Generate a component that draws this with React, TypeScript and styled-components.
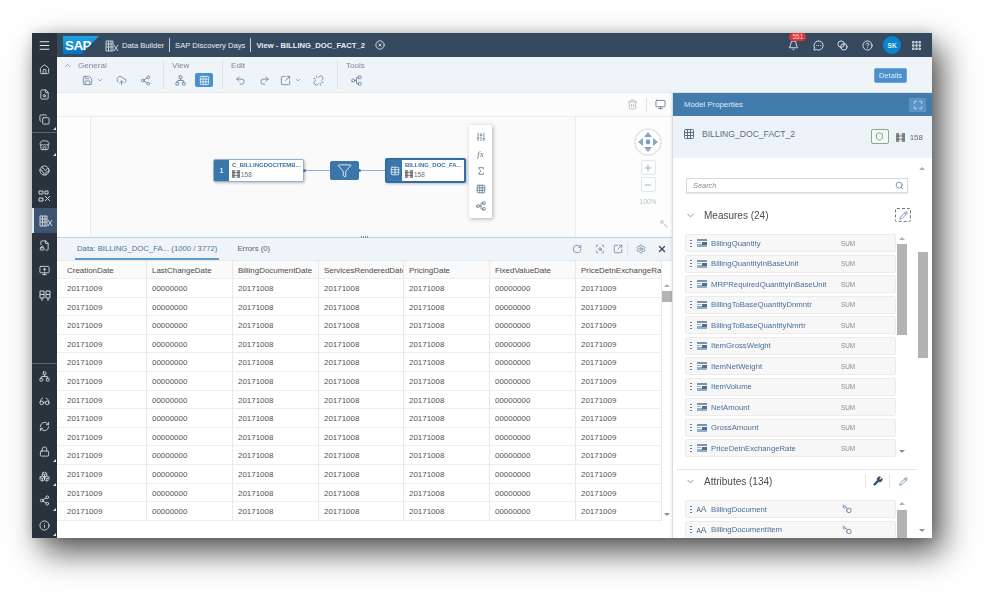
import React from "react";
import styled, { createGlobalStyle } from "styled-components";
import {
    Bell,
    Blend,
    Boxes,
    ChevronDown,
    ChevronUp,
    CircleHelp,
    CircleX,
    CloudUpload,
    Copy,
    Earth,
    FileLock2,
    FileSearch,
    Filter,
    Glasses,
    Grid3x3,
    Grip,
    Home,
    Info,
    Key,
    Lock,
    Maximize,
    Menu,
    MessageCircleMore,
    Minus,
    Monitor,
    MonitorUp,
    MoveUpLeft,
    Network,
    Pencil,
    Plus,
    Redo2,
    RefreshCw,
    RotateCw,
    Save,
    ScanSearch,
    Search,
    Settings,
    Share2,
    Shield,
    Sigma,
    SlidersVertical,
    SquareArrowOutUpRight,
    Store,
    Table,
    Trash2,
    Undo2,
    Unlink,
    Wrench,
    X,
} from "lucide-react";

const GlobalStyle = createGlobalStyle`
    html, body {
        margin: 0;
        background: #fff;
        font-family: "Liberation Sans", Arial, sans-serif;
        overflow: hidden;
    }
`;

const Page = styled.div`
    width: 997px;
    height: 603px;
    padding: 33px 0 0 32px;
    box-sizing: border-box;
`;

const Window = styled.div`
    width: 900px;
    height: 505px;
    display: flex;
    background: #fff;
    overflow: hidden;
    box-shadow: 10px 14px 30px rgba(0, 0, 0, 0.68), 0 0 12px rgba(0, 0, 0, 0.14);
    filter: blur(0.3px);
`;

/* left navigation */

const SideNav = styled.nav`
    width: 25px;
    flex: none;
    display: flex;
    flex-direction: column;
    background: #29323d;
    color: #cfd6de;
`;

const NavTop = styled.div`
    height: 24px;
    flex: none;
    display: flex;
    align-items: center;
    justify-content: center;
    color: #e4e9ee;
`;

const NavGroup = styled.div<{ $divided?: boolean }>`
    display: flex;
    flex-direction: column;
    border-bottom: ${(p) => (p.$divided ? "1px solid #5a6570" : "none")};
`;

const NavSpacer = styled.div`
    flex: 1;
    border-bottom: 1px solid #5a6570;
`;

const NavItem = styled.div<{ $active?: boolean; $corner?: boolean; $h?: number }>`
    position: relative;
    height: ${(p) => p.$h ?? 25}px;
    display: flex;
    align-items: center;
    justify-content: center;
    box-sizing: border-box;
    background: ${(p) => (p.$active ? "#3d5571" : "transparent")};
    border-left: ${(p) => (p.$active ? "2px solid #e4e9ee" : "0")};

    &::after {
        content: "";
        display: ${(p) => (p.$corner ? "block" : "none")};
        position: absolute;
        right: 1px;
        bottom: 2px;
        border-left: 3px solid transparent;
        border-bottom: 3px solid #dfe5ea;
    }
`;

/* shell bar */

const Main = styled.div`
    flex: 1;
    min-width: 0;
    display: flex;
    flex-direction: column;
`;

const ShellBar = styled.header`
    height: 24px;
    flex: none;
    display: flex;
    align-items: center;
    background: #354a5f;
    color: #e8edf2;
    font-size: 7.65px;
    padding-left: 6px;
`;

const SapLogo = styled.div`
    width: 36px;
    height: 18px;
    flex: none;
    display: flex;
    align-items: center;
    padding-left: 2px;
    margin-right: 6px;
    box-sizing: border-box;
    background: linear-gradient(#1ea4e4, #0a6fc2);
    clip-path: polygon(0 0, 100% 0, 52% 100%, 0 100%);
    color: #fff;
    font-size: 13.5px;
    font-weight: 700;
    letter-spacing: -0.6px;
`;

const Crumb = styled.span<{ $strong?: boolean; $first?: boolean }>`
    font-weight: ${(p) => (p.$strong ? 700 : 400)};
    margin-left: ${(p) => (p.$first ? 3 : 0)}px;
    white-space: nowrap;
`;

const CrumbSep = styled.span`
    width: 1px;
    height: 14px;
    background: #c4ced8;
    margin: 0 5px;
`;

const CrumbClose = styled.span`
    display: flex;
    margin-left: 10px;
`;

const ShellRight = styled.div`
    margin-left: auto;
    display: flex;
    align-items: center;
    padding-right: 3px;
`;

const ShellButton = styled.div`
    position: relative;
    width: 24.6px;
    height: 24px;
    display: flex;
    align-items: center;
    justify-content: center;
`;

const Badge = styled.span`
    position: absolute;
    top: 0;
    left: 8px;
    width: 17px;
    height: 8px;
    border-radius: 4px;
    background: #d5353b;
    color: #f5d6d6;
    font-size: 6.5px;
    line-height: 8px;
    text-align: center;
`;

const Avatar = styled.div`
    width: 18px;
    height: 18px;
    border-radius: 50%;
    background: #0a84cf;
    color: #e6f3fb;
    font-size: 6.5px;
    font-weight: 700;
    display: flex;
    align-items: center;
    justify-content: center;
`;

/* ribbon */

const Ribbon = styled.div`
    height: 36px;
    flex: none;
    display: flex;
    background: #eff4f9;
    color: #6d8aa8;
    border-bottom: 1px solid #e4e9ee;
    box-sizing: border-box;
`;

const RibbonGroup = styled.div<{ $w?: number; $indent: number; $labelIndent: number }>`
    width: ${(p) => (p.$w ? `${p.$w}px` : "auto")};
    flex: none;
    box-sizing: border-box;
    margin: 3px 0;
    padding-left: ${(p) => p.$indent}px;
    border-right: ${(p) => (p.$w ? "1px solid #dde3e9" : "none")};

    & > span {
        display: flex;
        align-items: center;
        gap: 6px;
        height: 10px;
        margin-left: ${(p) => p.$labelIndent}px;
        font-size: 8.1px;
        color: #7a8794;
    }
`;

const RibbonIcons = styled.div`
    display: flex;
    margin-top: 2px;
    height: 18px;
`;

const RibbonButton = styled.div<{ $w?: number; $active?: boolean }>`
    width: ${(p) => p.$w ?? 24}px;
    height: 16px;
    display: flex;
    align-items: center;
    justify-content: center;
    gap: 3px;
    position: relative;
    color: ${(p) => (p.$active ? "#dcebf7" : "#6d8aa8")};

    &::before {
        content: "";
        display: ${(p) => (p.$active ? "block" : "none")};
        position: absolute;
        inset: 1px 3px;
        background: #4a90cc;
        border-radius: 2px;
    }

    & > svg {
        position: relative;
    }
`;

const SidewaysNetwork = styled(Network)`
    transform: rotate(-90deg);
`;

const DetailsButton = styled.button`
    margin: 11px 25px 0 auto;
    width: 33px;
    height: 15px;
    padding: 0;
    border: 1px solid #6fa8d8;
    border-radius: 2px;
    background: #4a90cc;
    color: #e3eff8;
    font: 7.6px "Liberation Sans", Arial, sans-serif;
`;

/* workspace */

const Workspace = styled.div`
    flex: 1;
    min-height: 0;
    display: flex;
`;

const LeftPane = styled.div`
    width: 615px;
    flex: none;
    display: flex;
    flex-direction: column;
`;

const CanvasBar = styled.div`
    height: 24px;
    flex: none;
    box-sizing: border-box;
    display: flex;
    align-items: center;
    justify-content: flex-end;
    gap: 8px;
    padding-right: 6px;
    color: #6a7c8e;
    background: #fcfcfc;
    border-bottom: 1px solid #ececec;
`;

const BarDivider = styled.span<{ $h?: number }>`
    width: 1px;
    height: ${(p) => p.$h ?? 14}px;
    background: #dde2e6;
`;

const Canvas = styled.div`
    position: relative;
    height: 120px;
    flex: none;
    background: #fdfdfd;
`;

const Sheet = styled.div`
    position: absolute;
    left: 33px;
    top: 0;
    bottom: 0;
    width: 484px;
    background: #fafafa;
    border-left: 1px solid #ebebeb;
    border-right: 1px solid #ebebeb;
`;

const Wire = styled.div<{ $x: number; $w: number }>`
    position: absolute;
    left: ${(p) => p.$x}px;
    top: 53px;
    width: ${(p) => p.$w}px;
    height: 1px;
    background: #8fb2d0;
`;

const Port = styled.div<{ $x: number }>`
    position: absolute;
    left: ${(p) => p.$x}px;
    top: 52px;
    width: 3px;
    height: 3px;
    border-radius: 50%;
    background: #3a76aa;
`;

const Node = styled.div<{ $x: number; $y: number; $w: number; $h: number; $selected?: boolean }>`
    position: absolute;
    left: ${(p) => p.$x}px;
    top: ${(p) => p.$y}px;
    width: ${(p) => p.$w}px;
    height: ${(p) => p.$h}px;
    display: flex;
    box-sizing: border-box;
    border: ${(p) => (p.$selected ? "2px solid #2f6fa6" : "1px solid #8db4d4")};
    border-radius: 2px;
    background: #fff;
    box-shadow: 1px 1px 3px rgba(0, 0, 0, 0.25);
    overflow: hidden;
`;

const NodeTag = styled.div`
    width: 15px;
    flex: none;
    display: flex;
    align-items: center;
    justify-content: center;
    background: #3a76aa;
    color: #e8f0f7;
    font-size: 6.5px;
    font-weight: 700;
`;

const NodeBody = styled.div`
    min-width: 0;
    flex: 1;
    padding: 2px 0 0 3px;
    color: #3f73a1;
    font-size: 6px;
    font-weight: 700;
    white-space: nowrap;
`;

const NodeCount = styled.div`
    display: flex;
    align-items: center;
    gap: 1px;
    margin-top: 2px;
    color: #6b6b6b;
    font-size: 6.5px;
    font-weight: 400;
`;

const FilterNode = styled.div`
    position: absolute;
    left: 273px;
    top: 44px;
    width: 29px;
    height: 19px;
    display: flex;
    align-items: center;
    justify-content: center;
    border-radius: 2px;
    background: #3a76aa;
    color: #e8f0f7;
`;

const Palette = styled.div`
    position: absolute;
    left: 412px;
    top: 8px;
    width: 23px;
    height: 93px;
    display: flex;
    flex-direction: column;
    align-items: center;
    justify-content: space-around;
    padding: 3px 0;
    box-sizing: border-box;
    background: #fff;
    color: #5f7890;
    box-shadow: 1px 1px 4px rgba(0, 0, 0, 0.3);
`;

const FxMark = styled.span`
    font: italic 9px "Liberation Serif", serif;
    color: #5f7890;
`;

const NavPad = styled.div`
    position: absolute;
    left: 577px;
    top: 11px;
    display: flex;
    flex-direction: column;
    align-items: center;
    color: #8aa6be;
`;

const ZoomButton = styled.div<{ $first?: boolean }>`
    width: 13px;
    height: 13px;
    margin-top: ${(p) => (p.$first ? 4 : 2)}px;
    border: 1px solid #e1e6ea;
    border-radius: 2px;
    background: #fff;
    display: flex;
    align-items: center;
    justify-content: center;
`;

const ZoomLabel = styled.span`
    margin-top: 6px;
    font-size: 6.5px;
    color: #b4c2ce;
`;

const CornerIcon = styled.div`
    position: absolute;
    right: 3px;
    bottom: 4px;
    color: #c2c8cd;
`;

/* data preview */

const DataTabs = styled.div`
    position: relative;
    height: 24px;
    flex: none;
    box-sizing: border-box;
    display: flex;
    align-items: stretch;
    padding-left: 18px;
    background: #eff4f9;
    border-top: 1px solid #b7d1e8;
    border-bottom: 1px solid #e6e9ec;
    font-size: 7.75px;
    color: #58708a;

    &::before {
        content: "";
        position: absolute;
        left: 304px;
        top: -2px;
        width: 8px;
        height: 2px;
        background: repeating-linear-gradient(90deg, #7d96ad 0 1px, transparent 1px 2px);
    }
`;

const Tab = styled.div<{ $active?: boolean }>`
    display: flex;
    align-items: center;
    margin-right: 16px;
    padding: 0 2px;
    color: ${(p) => (p.$active ? "#4f7394" : "#56606a")};
    border-bottom: ${(p) => (p.$active ? "2px solid #5b9bd0" : "2px solid transparent")};
`;

const TabTools = styled.div`
    margin-left: auto;
    display: flex;
    align-items: center;
    color: #6d8aa8;
`;

const TabTool = styled.span<{ $w: number; $dark?: boolean }>`
    width: ${(p) => p.$w}px;
    display: flex;
    justify-content: center;
    color: ${(p) => (p.$dark ? "#2f4a66" : "inherit")};
`;

const TableWrap = styled.div`
    position: relative;
    flex: 1;
    min-height: 0;
    background: #fff;
`;

const TableRow = styled.div<{ $head?: boolean }>`
    display: grid;
    grid-template-columns: 90px 86px 86px 85px 86px 86px 86px;
    width: 605px;
    height: ${(p) => (p.$head ? 18 : 18.6)}px;
    box-sizing: border-box;
    border-bottom: 1px solid #eeeeee;
    background: ${(p) => (p.$head ? "#fafafa" : "#fff")};
    color: ${(p) => (p.$head ? "#4b4b4b" : "#525252")};
    font-size: 7.95px;
`;

const Cell = styled.div`
    padding-left: 5px;
    line-height: 19px;
    white-space: nowrap;
    overflow: hidden;
    border-right: 1px solid #e8e8e8;

    &:first-child {
        padding-left: 10px;
    }
`;

const ScrollTrack = styled.div<{ $x: number; $y: number; $h: number }>`
    position: absolute;
    left: ${(p) => p.$x}px;
    top: ${(p) => p.$y}px;
    width: 10px;
    height: ${(p) => p.$h}px;
    background: #b3b3b3;
`;

const ScrollArrow = styled.div<{ $x: number; $y: number; $down?: boolean }>`
    position: absolute;
    left: ${(p) => p.$x}px;
    top: ${(p) => p.$y}px;
    border-left: 3px solid transparent;
    border-right: 3px solid transparent;
    border-bottom: ${(p) => (p.$down ? "none" : "3px solid #b0b0b0")};
    border-top: ${(p) => (p.$down ? "3px solid #8f8f8f" : "none")};
`;

/* properties panel */

const RightPane = styled.aside`
    position: relative;
    flex: 1;
    min-width: 0;
    display: flex;
    flex-direction: column;
    border-left: 1px solid #dcdcdc;
    box-shadow: -1px 0 2px rgba(0, 0, 0, 0.08);
    background: #fff;
`;

const PanelHeader = styled.div`
    height: 23px;
    flex: none;
    display: flex;
    align-items: center;
    justify-content: space-between;
    padding: 0 6px 0 11px;
    background: #427cad;
    color: #dfeaf4;
    font-size: 7.8px;
`;

const ExpandButton = styled.div`
    width: 17px;
    height: 14px;
    display: flex;
    align-items: center;
    justify-content: center;
    background: #5b93c5;
    color: #dfeaf4;
`;

const ModelInfo = styled.div`
    height: 42px;
    flex: none;
    display: flex;
    align-items: flex-start;
    box-sizing: border-box;
    padding: 12px 9px 0 10px;
    background: #ebf2f8;
    color: #5d6d7e;
    font-size: 8.6px;
`;

const ModelName = styled.span`
    margin-left: 7px;
    line-height: 12px;
`;

const ShieldBox = styled.div`
    margin: 1px 7px 0 auto;
    width: 18px;
    height: 15px;
    box-sizing: border-box;
    display: flex;
    align-items: center;
    justify-content: center;
    border: 1px solid #7fae8b;
    border-radius: 2px;
    background: #f3f7f5;
    color: #5f8a6c;
`;

const CountLabel = styled.span`
    display: flex;
    align-items: center;
    gap: 5px;
    margin-top: 2px;
    height: 14px;
    color: #6b6b6b;
    font-size: 8px;
`;

const PanelBody = styled.div`
    flex: 1;
    min-height: 0;
    overflow: hidden;
    padding: 20px 0 0 12px;
`;

const SearchBox = styled.div`
    width: 222px;
    height: 15px;
    margin-left: 1px;
    box-sizing: border-box;
    display: flex;
    align-items: center;
    justify-content: space-between;
    padding: 0 3px 0 6px;
    border: 1px solid #dadada;
    box-shadow: 0 1px 1px rgba(0, 0, 0, 0.08);
    color: #8c8c8c;
    font-size: 7.4px;
    font-style: italic;

    & > svg {
        color: #587692;
    }
`;

const SectionHead = styled.div<{ $top: number; $w: number }>`
    display: flex;
    align-items: center;
    height: 14px;
    margin-top: ${(p) => p.$top}px;
    width: ${(p) => p.$w}px;
    color: #4c4c4c;
    font-size: 10px;
`;

const HeadChevron = styled(ChevronDown)`
    color: #6d8aa8;
    margin-right: 8px;
`;

const HeadTools = styled.div`
    margin-left: auto;
    display: flex;
    align-items: center;
    color: #4d79a3;
`;

const DashedButton = styled.div`
    width: 16px;
    height: 14px;
    box-sizing: border-box;
    display: flex;
    align-items: center;
    justify-content: center;
    border: 1px dashed #777;
    border-radius: 2px;
`;

const ToolCell = styled.div<{ $w: number; $dark?: boolean }>`
    width: ${(p) => p.$w}px;
    height: 14px;
    display: flex;
    align-items: center;
    justify-content: center;
    color: ${(p) => (p.$dark ? "#2f4a66" : "inherit")};
    border-left: 1px solid #e3e3e3;
`;

const Rule = styled.div`
    width: 240px;
    height: 1px;
    margin: 12px 0 4px -8px;
    background: #e7e7e7;
`;

const FieldList = styled.div<{ $top: number }>`
    display: flex;
    flex-direction: column;
    gap: 2.5px;
    margin-top: ${(p) => p.$top}px;
`;

const FieldRow = styled.div`
    width: 211px;
    height: 18px;
    flex: none;
    box-sizing: border-box;
    display: flex;
    align-items: center;
    padding-left: 4px;
    background: #f7f7f7;
    border: 1px solid #ebebeb;
    border-radius: 2px;
    font-size: 7.75px;
    color: #48709a;
`;

const DragDots = styled.span`
    width: 2px;
    height: 9px;
    margin-right: 4px;
    background: radial-gradient(circle, #5a7d9e 0.8px, transparent 1px) 0 0 / 2px 3px;
`;

const FieldIcon = styled.span`
    width: 11px;
    flex: none;
    margin-right: 4px;
    display: flex;
    align-items: baseline;
    justify-content: center;
    color: #3f6288;
    font-size: 8.5px;
`;

const SmallLetter = styled.span`
    font-size: 6.5px;
`;

const FieldName = styled.span`
    width: 130px;
    flex: none;
    white-space: nowrap;
`;

const Aggregation = styled.span`
    color: #8a8a8a;
    font-size: 6.3px;
`;

const KeyIcon = styled(Key)`
    margin-left: 1px;
    color: #58789a;
    transform: scaleX(-1);
`;

const MeasureGlyph = () => (
    <svg width="10" height="8" viewBox="0 0 10 8">
        <rect x="0" y="0" width="10" height="2" fill="#7f93a8" />
        <rect x="0" y="3" width="4" height="1" fill="#a4b4c4" />
        <rect x="0" y="5" width="10" height="3" fill="#8fb0cc" />
        <rect x="5" y="3" width="5" height="3" fill="#4d6f91" />
    </svg>
);

const ColumnsGlyph = ({ size = 9 }: { size?: number }) => (
    <svg width={size} height={size} viewBox="0 0 10 10">
        <rect x="0" y="0" width="10" height="10" fill="#8c8c8c" />
        <rect x="3.5" y="0" width="3" height="10" fill="#e8e8e8" />
        <rect x="0" y="3" width="10" height="0.7" fill="#555" />
        <rect x="0" y="6.5" width="10" height="0.7" fill="#555" />
    </svg>
);

const DataBuilderGlyph = ({ color }: { color: string }) => (
    <svg width="14" height="13" viewBox="0 0 14 13" fill="none" stroke={color} strokeWidth="1">
        <path d="M1 2h7v10H1zM1 5h7M1 8h7M3.5 2v10M6 2v10" />
        <path d="M9 6l4 6M13 6l-4 6" />
    </svg>
);

const ScatterGlyph = () => (
    <svg width="13" height="12" viewBox="0 0 13 12" fill="none" stroke="#cfd6de" strokeWidth="1">
        <path d="M1 1h4v3H1zM7 1h3v3H7zM1 8h4v3H1z" />
        <path d="M7 6l5 5M12 6l-5 5" />
    </svg>
);

const TowersGlyph = () => (
    <svg width="12" height="12" viewBox="0 0 12 12" fill="none" stroke="#cfd6de" strokeWidth="1">
        <path d="M1 1h4v7H1zM7 1h4v7H7zM1 4.5h4M7 4.5h4M3 8v3M9 8v3" />
    </svg>
);

const NavCross = () => (
    <svg width="28" height="28" viewBox="0 0 28 28">
        <circle cx="14" cy="14" r="13" fill="#fff" stroke="#dfe4e8" strokeWidth="1.5" />
        <circle cx="14" cy="14" r="2.4" fill="#7f9fbb" />
        <path d="M14 4l4 5h-8zM14 24l4-5h-8zM4 14l5-4v8zM24 14l-5-4v8z" fill="#8aa6be" />
    </svg>
);

const columns = [
    "CreationDate",
    "LastChangeDate",
    "BillingDocumentDate",
    "ServicesRenderedDate",
    "PricingDate",
    "FixedValueDate",
    "PriceDetnExchangeRate",
];

const rowValues = ["20171009", "00000000", "20171008", "20171008", "20171008", "00000000", "20171009"];
const rows = Array.from({ length: 13 }, (_, i) => i);

const measures = [
    "BillingQuantity",
    "BillingQuantityInBaseUnit",
    "MRPRequiredQuantityInBaseUnit",
    "BillingToBaseQuantityDnmntr",
    "BillingToBaseQuantityNmrtr",
    "ItemGrossWeight",
    "ItemNetWeight",
    "ItemVolume",
    "NetAmount",
    "GrossAmount",
    "PriceDetnExchangeRate",
];

const attributes = ["BillingDocument", "BillingDocumentItem"];

const App = () => {
    return (
        <Page>
            <GlobalStyle />
            <Window>
                <SideNav>
                    <NavTop>
                        <Menu size={13} />
                    </NavTop>
                    <NavGroup $divided>
                        <NavItem><Home size={11} /></NavItem>
                        <NavItem><FileSearch size={11} /></NavItem>
                        <NavItem $corner><Copy size={11} /></NavItem>
                    </NavGroup>
                    <NavGroup>
                        <NavItem $corner><Store size={11} /></NavItem>
                        <NavItem><Earth size={11} /></NavItem>
                        <NavItem><ScatterGlyph /></NavItem>
                        <NavItem $active><DataBuilderGlyph color="#cfd6de" /></NavItem>
                        <NavItem><FileLock2 size={11} /></NavItem>
                        <NavItem><MonitorUp size={11} /></NavItem>
                        <NavItem><TowersGlyph /></NavItem>
                    </NavGroup>
                    <NavSpacer />
                    <NavGroup>
                        <NavItem $h={24.8}><Network size={11} /></NavItem>
                        <NavItem $h={24.8}><Glasses size={11} /></NavItem>
                        <NavItem $h={24.8}><RefreshCw size={11} /></NavItem>
                        <NavItem $h={24.8} $corner><Lock size={11} /></NavItem>
                        <NavItem $h={24.8} $corner><Boxes size={11} /></NavItem>
                        <NavItem $h={24.8} $corner><Share2 size={11} /></NavItem>
                        <NavItem $h={24.8} $corner><Info size={11} /></NavItem>
                    </NavGroup>
                </SideNav>

                <Main>
                    <ShellBar>
                        <SapLogo>SAP</SapLogo>
                        <DataBuilderGlyph color="#c6d0da" />
                        <Crumb $first>Data Builder</Crumb>
                        <CrumbSep />
                        <Crumb>SAP Discovery Days</Crumb>
                        <CrumbSep />
                        <Crumb $strong>View - BILLING_DOC_FACT_2</Crumb>
                        <CrumbClose>
                            <CircleX size={10} />
                        </CrumbClose>
                        <ShellRight>
                            <ShellButton>
                                <Bell size={11} />
                                <Badge>551</Badge>
                            </ShellButton>
                            <ShellButton><MessageCircleMore size={11} /></ShellButton>
                            <ShellButton><Blend size={11} /></ShellButton>
                            <ShellButton><CircleHelp size={11} /></ShellButton>
                            <ShellButton><Avatar>SK</Avatar></ShellButton>
                            <ShellButton><Grip size={11} strokeWidth={3.5} /></ShellButton>
                        </ShellRight>
                    </ShellBar>

                    <Ribbon>
                        <RibbonGroup $w={107} $indent={20} $labelIndent={-14}>
                            <span>
                                <ChevronUp size={9} />
                                General
                            </span>
                            <RibbonIcons>
                                <RibbonButton $w={32}>
                                    <Save size={11} />
                                    <ChevronDown size={8} />
                                </RibbonButton>
                                <RibbonButton><CloudUpload size={11} /></RibbonButton>
                                <RibbonButton><Share2 size={11} /></RibbonButton>
                            </RibbonIcons>
                        </RibbonGroup>
                        <RibbonGroup $w={59} $indent={4} $labelIndent={4}>
                            <span>View</span>
                            <RibbonIcons>
                                <RibbonButton><Network size={11} /></RibbonButton>
                                <RibbonButton $active><Grid3x3 size={11} /></RibbonButton>
                            </RibbonIcons>
                        </RibbonGroup>
                        <RibbonGroup $w={115} $indent={5} $labelIndent={3}>
                            <span>Edit</span>
                            <RibbonIcons>
                                <RibbonButton><Undo2 size={11} /></RibbonButton>
                                <RibbonButton><Redo2 size={11} /></RibbonButton>
                                <RibbonButton $w={30}>
                                    <SquareArrowOutUpRight size={11} />
                                    <ChevronDown size={8} />
                                </RibbonButton>
                                <RibbonButton><Unlink size={11} /></RibbonButton>
                            </RibbonIcons>
                        </RibbonGroup>
                        <RibbonGroup $indent={6} $labelIndent={2}>
                            <span>Tools</span>
                            <RibbonIcons>
                                <RibbonButton><SidewaysNetwork size={11} /></RibbonButton>
                            </RibbonIcons>
                        </RibbonGroup>
                        <DetailsButton>Details</DetailsButton>
                    </Ribbon>

                    <Workspace>
                        <LeftPane>
                            <CanvasBar>
                                <Trash2 size={11} color="#b9c0c6" />
                                <BarDivider />
                                <Monitor size={11} />
                            </CanvasBar>
                            <Canvas>
                                <Sheet />
                                <Wire $x={247} $w={26} />
                                <Wire $x={302} $w={26} />
                                <Node $x={156} $y={42} $w={91} $h={23}>
                                    <NodeTag>1</NodeTag>
                                    <NodeBody>
                                        C_BILLINGDOCITEMB...
                                        <NodeCount><ColumnsGlyph size={8} />158</NodeCount>
                                    </NodeBody>
                                </Node>
                                <Port $x={246} />
                                <FilterNode><Filter size={15} strokeWidth={1.5} /></FilterNode>
                                <Port $x={301} />
                                <Node $x={328} $y={41} $w={81} $h={25} $selected>
                                    <NodeTag><Table size={10} /></NodeTag>
                                    <NodeBody>
                                        BILLING_DOC_FA...
                                        <NodeCount><ColumnsGlyph size={8} />158</NodeCount>
                                    </NodeBody>
                                </Node>
                                <Palette>
                                    <SlidersVertical size={10} />
                                    <FxMark>fx</FxMark>
                                    <Sigma size={10} />
                                    <Grid3x3 size={10} />
                                    <SidewaysNetwork size={10} />
                                </Palette>
                                <NavPad>
                                    <NavCross />
                                    <ZoomButton $first><Plus size={10} /></ZoomButton>
                                    <ZoomButton><Minus size={10} /></ZoomButton>
                                    <ZoomLabel>100%</ZoomLabel>
                                </NavPad>
                                <CornerIcon><MoveUpLeft size={10} strokeWidth={2.5} /></CornerIcon>
                            </Canvas>

                            <DataTabs>
                                <Tab $active>Data: BILLING_DOC_FA... (1000 / 3772)</Tab>
                                <Tab>Errors (0)</Tab>
                                <TabTools>
                                    <TabTool $w={22}><RotateCw size={10} /></TabTool>
                                    <TabTool $w={24}><ScanSearch size={10} /></TabTool>
                                    <TabTool $w={12}><SquareArrowOutUpRight size={10} /></TabTool>
                                    <TabTool $w={6}><BarDivider $h={12} /></TabTool>
                                    <TabTool $w={22}><Settings size={10} /></TabTool>
                                    <TabTool $w={20} $dark><X size={10} strokeWidth={3} /></TabTool>
                                </TabTools>
                            </DataTabs>

                            <TableWrap>
                                <TableRow $head>
                                    {columns.map((c) => (
                                        <Cell key={c}>{c}</Cell>
                                    ))}
                                </TableRow>
                                {rows.map((r) => (
                                    <TableRow key={r}>
                                        {rowValues.map((v, i) => (
                                            <Cell key={i}>{v}</Cell>
                                        ))}
                                    </TableRow>
                                ))}
                                <ScrollArrow $x={607} $y={23} />
                                <ScrollTrack $x={605} $y={30} $h={11} />
                                <ScrollArrow $x={607} $y={252} $down />
                            </TableWrap>
                        </LeftPane>

                        <RightPane>
                            <PanelHeader>
                                Model Properties
                                <ExpandButton><Maximize size={10} /></ExpandButton>
                            </PanelHeader>
                            <ModelInfo>
                                <Grid3x3 size={12} />
                                <ModelName>BILLING_DOC_FACT_2</ModelName>
                                <ShieldBox><Shield size={9} /></ShieldBox>
                                <CountLabel><ColumnsGlyph />158</CountLabel>
                            </ModelInfo>
                            <PanelBody>
                                <SearchBox>
                                    Search
                                    <Search size={9} />
                                </SearchBox>
                                <SectionHead $top={15} $w={226}>
                                    <HeadChevron size={11} />
                                    Measures (24)
                                    <HeadTools>
                                        <DashedButton><Pencil size={9} /></DashedButton>
                                    </HeadTools>
                                </SectionHead>
                                <FieldList $top={12}>
                                    {measures.map((m) => (
                                        <FieldRow key={m}>
                                            <DragDots />
                                            <FieldIcon><MeasureGlyph /></FieldIcon>
                                            <FieldName>{m}</FieldName>
                                            <Aggregation>SUM</Aggregation>
                                        </FieldRow>
                                    ))}
                                </FieldList>
                                <Rule />
                                <SectionHead $top={0} $w={231}>
                                    <HeadChevron size={11} />
                                    Attributes (134)
                                    <HeadTools>
                                        <ToolCell $w={23} $dark><Wrench size={10} fill="#2f4a66" /></ToolCell>
                                        <ToolCell $w={26}><Pencil size={9} /></ToolCell>
                                    </HeadTools>
                                </SectionHead>
                                <FieldList $top={12}>
                                    {attributes.map((a) => (
                                        <FieldRow key={a}>
                                            <DragDots />
                                            <FieldIcon><SmallLetter>A</SmallLetter>A</FieldIcon>
                                            <FieldName>{a}</FieldName>
                                            <KeyIcon size={10} />
                                        </FieldRow>
                                    ))}
                                </FieldList>
                            </PanelBody>

                            <ScrollArrow $x={246} $y={74} />
                            <ScrollTrack $x={245} $y={159} $h={106} />
                            <ScrollArrow $x={246} $y={436} $down />
                            <ScrollArrow $x={226} $y={144} />
                            <ScrollTrack $x={224} $y={151} $h={91} />
                            <ScrollArrow $x={226} $y={357} $down />
                            <ScrollArrow $x={226} $y={409} />
                            <ScrollTrack $x={224} $y={417} $h={28} />
                        </RightPane>
                    </Workspace>
                </Main>
            </Window>
        </Page>
    );
};

export default App;
